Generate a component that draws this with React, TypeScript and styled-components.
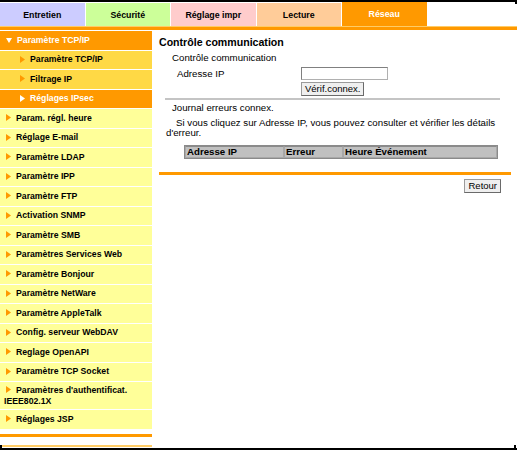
import React from 'react';
import styled, { createGlobalStyle } from 'styled-components';

const Global = createGlobalStyle`
  html, body { margin: 0; padding: 0; background: #fff; }
  body { font-family: "Liberation Sans", Arial, sans-serif; color: #000; }
  * { box-sizing: border-box; }
`;

const Frame = styled.div`
  position: relative;
  width: 517px;
  border-top: 2px solid #000;
  border-bottom: 2px solid #000;
  &::before {
    content: '';
    position: absolute;
    right: 0;
    top: -2px;
    width: 2px;
    height: 4px;
    background: #000;
  }
  &::after {
    content: '';
    position: absolute;
    right: 1px;
    bottom: -2px;
    width: 2px;
    height: 5px;
    background: #000;
    box-shadow: -514px 0 0 #000;
  }
`;

const TabBar = styled.div`
  display: flex;
  align-items: flex-end;
  gap: 1px;
  height: 24px;
`;

const Tab = styled.div<{ $bg: string; $active?: boolean }>`
  width: 84.5px;
  height: ${p => (p.$active ? 24 : 23)}px;
  background: ${p => p.$bg};
  color: ${p => (p.$active ? '#fff' : '#000')};
  font-size: 8.8px;
  font-weight: bold;
  display: flex;
  align-items: center;
  justify-content: center;
`;

const TopBar = styled.div`
  height: 4px;
  border-top: 1px solid #ffcc66;
  background: #ff9900;
  margin-bottom: 1px;
`;

const Body = styled.div`
  display: flex;
  align-items: flex-start;
`;

const Sidebar = styled.div`
  width: 152px;
  flex: none;
  display: flex;
  flex-direction: column;
`;

type Variant = 'head' | 'sub' | 'subActive' | 'item';

const bgFor: Record<Variant, string> = {
  head: '#ff9900',
  sub: '#ffd945',
  subActive: '#ff9900',
  item: '#ffff99',
};

const MenuItem = styled.div<{ $v: Variant }>`
  min-height: 19.5px;
  display: flex;
  align-items: center;
  padding: 2.5px 2px 2.5px ${p => (p.$v === 'sub' || p.$v === 'subActive' ? 18 : 4)}px;
  border-bottom: 1px solid #fff;
  background: ${p => bgFor[p.$v]};
  color: ${p => (p.$v === 'head' || p.$v === 'subActive' ? '#fff' : '#000')};
  font-size: 8.7px;
  font-weight: bold;
  line-height: 11px;
`;

const Arrow = styled.svg`
  display: inline-block;
  margin: 0 5px 0 2px;
  vertical-align: -0.5px;
`;

const MenuFoot = styled.div`
  margin-top: 4px;
  height: 3px;
  background: #ff9900;
`;

const MenuLine = styled.div`
  margin-top: 8px;
  height: 2px;
  background: #ffcc66;
  margin-bottom: 1px;
`;

const Main = styled.div`
  flex: 1;
  padding: 0 6px 0 7px;
  font-size: 9.7px;
`;

const Heading = styled.div`
  margin-top: 5px;
  font-size: 10.6px;
  font-weight: bold;
  line-height: 12px;
`;

const Subtitle = styled.div`
  margin-top: 3.5px;
  padding-left: 13px;
  line-height: 11px;
`;

const FormGrid = styled.div`
  margin-top: 4.5px;
  padding-left: 18px;
  display: grid;
  grid-template-columns: 124px auto;
  row-gap: 2px;
  align-items: center;
  justify-items: start;
`;

const Label = styled.span`
  line-height: 11px;
`;

const TextInput = styled.input`
  width: 87px;
  height: 13px;
  margin: 0;
  padding: 0 2px;
  border: 1px solid #808080;
  border-right-color: #b0b0b0;
  border-bottom-color: #b0b0b0;
  background: #fff;
  font: inherit;
`;

const Button = styled.button`
  height: 14px;
  margin: 0;
  padding: 0 3px;
  border: 1px solid #9a9a9a;
  border-right-color: #6a6a6a;
  border-bottom-color: #6a6a6a;
  background: #efefef;
  font-family: inherit;
  font-size: 9.5px;
  line-height: 12px;
  color: #000;
`;

const Rule = styled.div`
  margin: 2px 0 0 6px;
  width: 335px;
  height: 2px;
  background: #c4c4c4;
`;

const Journal = styled.div`
  margin-top: 1.5px;
  padding-left: 13px;
  line-height: 11px;
`;

const Para = styled.p`
  margin: 5px 0 0 7px;
  text-indent: 10px;
  line-height: 10.5px;
`;

const Table = styled.div`
  margin: 6px 0 0 25px;
  width: 314px;
  height: 14px;
  display: grid;
  grid-template-columns: 99px 59px 1fr;
  border: 1px solid #8a8a8a;
  background: #c0c0c0;
`;

const Th = styled.div`
  border: 1px solid #a8a8a8;
  border-top-color: #8a8a8a;
  padding: 0 1px;
  font-weight: bold;
  line-height: 10px;
  background: #c0c0c0;
  color: #000;
`;

const OrangeBar = styled.div`
  margin-top: 13px;
  height: 3px;
  background: #ff9900;
`;

const Actions = styled.div`
  margin-top: 4px;
  display: flex;
  justify-content: flex-end;
  padding-right: 10px;
`;

const RightArrow = ({ color }: { color: string }) => (
  <Arrow width="5" height="7" viewBox="0 0 5 7">
    <polygon points="0,0 5,3.5 0,7" fill={color} />
  </Arrow>
);

const DownArrow = () => (
  <Arrow width="6" height="5" viewBox="0 0 6 5">
    <polygon points="0,0 6,0 3,5" fill="#fff" />
  </Arrow>
);

const tabs = [
  { label: 'Entretien', bg: '#ccccff' },
  { label: 'Sécurité', bg: '#ccff99' },
  { label: 'Réglage impr', bg: '#ffcccc' },
  { label: 'Lecture', bg: '#ffcc99' },
  { label: 'Réseau', bg: '#ff9900', active: true },
];

const items = [
  'Param. régl. heure',
  'Réglage E-mail',
  'Paramètre LDAP',
  'Paramètre IPP',
  'Paramètre FTP',
  'Activation SNMP',
  'Paramètre SMB',
  'Paramètres Services Web',
  'Paramètre Bonjour',
  'Paramètre NetWare',
  'Paramètre AppleTalk',
  'Config. serveur WebDAV',
  'Reglage OpenAPI',
  'Paramètre TCP Socket',
  "Paramètres d'authentificat. IEEE802.1X",
  'Réglages JSP',
];

export default function App() {
  return (
    <>
      <Global />
      <Frame>
        <TabBar>
          {tabs.map(t => (
            <Tab key={t.label} $bg={t.bg} $active={t.active}>
              {t.label}
            </Tab>
          ))}
        </TabBar>
        <TopBar />
        <Body>
          <Sidebar>
            <MenuItem $v="head">
              <span>
                <DownArrow />
                Paramètre TCP/IP
              </span>
            </MenuItem>
            <MenuItem $v="sub">
              <span>
                <RightArrow color="#ff9900" />
                Paramètre TCP/IP
              </span>
            </MenuItem>
            <MenuItem $v="sub">
              <span>
                <RightArrow color="#ff9900" />
                Filtrage IP
              </span>
            </MenuItem>
            <MenuItem $v="subActive">
              <span>
                <RightArrow color="#fff" />
                Réglages IPsec
              </span>
            </MenuItem>
            {items.map(i => (
              <MenuItem key={i} $v="item">
                <span>
                  <RightArrow color="#ff9900" />
                  {i}
                </span>
              </MenuItem>
            ))}
            <MenuFoot />
            <MenuLine />
          </Sidebar>
          <Main>
            <Heading>Contrôle communication</Heading>
            <Subtitle>Contrôle communication</Subtitle>
            <FormGrid>
              <Label>Adresse IP</Label>
              <TextInput type="text" />
              <span />
              <Button>Vérif.connex.</Button>
            </FormGrid>
            <Rule />
            <Journal>Journal erreurs connex.</Journal>
            <Para>
              Si vous cliquez sur Adresse IP, vous pouvez consulter et vérifier les détails d'erreur.
            </Para>
            <Table>
              <Th>Adresse IP</Th>
              <Th>Erreur</Th>
              <Th>Heure Événement</Th>
            </Table>
            <OrangeBar />
            <Actions>
              <Button>Retour</Button>
            </Actions>
          </Main>
        </Body>
      </Frame>
    </>
  );
}
